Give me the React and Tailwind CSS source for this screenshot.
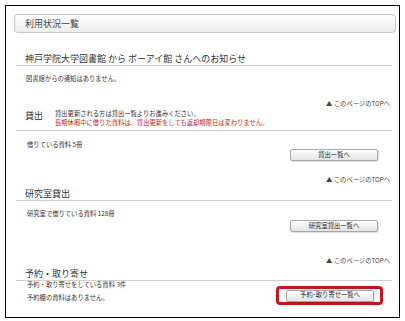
import React from 'react';

const font = { fontFamily: '"Noto Sans CJK JP", "Noto Sans", sans-serif' };

function TopLink({ className = '' }) {
  return (
    <div className={`text-right pr-[2px] text-[6.3px] leading-[9px] text-[#444] ${className}`}>
      ▲ このページのTOPへ
    </div>
  );
}

function Heading({ children, className = '' }) {
  return (
    <div className={`pl-[9px] text-[9px] leading-[13px] text-[#333] border-b border-[#cfcfcf] ${className}`}>
      {children}
    </div>
  );
}

function Button({ children, className = '' }) {
  return (
    <div
      className={`h-[12px] w-[88px] flex items-center justify-center rounded-[2px] border border-[#a8a8a8] bg-gradient-to-b from-white to-[#e4e4e4] shadow-[1px_1px_0_rgba(0,0,0,0.12)] text-[6.3px] leading-none text-[#222] ${className}`}
    >
      {children}
    </div>
  );
}

export default function App() {
  return (
    <div className="w-[405px] h-[321px] bg-white pt-[5px] pl-[5px]" style={font}>
      <div className="w-[395px] h-[313px] border border-black pl-[8px] pr-[3px] pt-[8px]">
        {/* Page title bar */}
        <div className="h-[19px] rounded-[4px] border border-[#c8c8c8] bg-gradient-to-b from-white to-[#ececec] pl-[10px] flex items-center text-[9px] text-[#444]">
          利用状況一覧
        </div>

        <div className="ml-[2px] mr-[4px]">
          {/* Notice */}
          <Heading className="mt-[19px]">神戸学院大学図書館 から ボーアイ館 さんへのお知らせ</Heading>
          <div className="mt-[8px] pl-[10px] text-[6.3px] leading-[10px] text-[#333]">図書館からの通知はありません。</div>

          {/* Loans */}
          <TopLink className="mt-[15px]" />
          <div className="mt-[1px] flex items-start border-b border-[#cfcfcf] pb-[3px]">
            <div className="w-[39px] pl-[9px] text-[9px] leading-[14px] text-[#333]">貸出</div>
            <div className="text-[6.3px] leading-[9px]">
              <div className="text-[#333]">貸出更新される方は貸出一覧よりお進みください。</div>
              <div className="text-[#c0282d]">長期休暇中に借りた資料は、貸出更新をしても返却期限日は変わりません。</div>
            </div>
          </div>
          <div className="mt-[10px] pl-[11px] text-[6.3px] leading-[8px] text-[#333]">借りている資料 5冊</div>
          <div className="flex justify-end pr-[14px]">
            <Button>貸出一覧へ</Button>
          </div>

          {/* Lab loans */}
          <TopLink className="mt-[14px]" />
          <Heading className="mt-[3px]">研究室貸出</Heading>
          <div className="mt-[9px] pl-[11px] text-[6.3px] leading-[8px] text-[#333]">研究室で借りている資料 128冊</div>
          <div className="mt-[2px] flex justify-end pr-[14px]">
            <Button>研究室貸出一覧へ</Button>
          </div>

          {/* Reservations */}
          <TopLink className="mt-[24px]" />
          <Heading className="mt-[2px]">予約・取り寄せ</Heading>
          <div className="flex justify-between">
            <div className="pl-[11px] text-[6.3px] leading-[8px] text-[#333]">
              <div>予約・取り寄せをしている資料 3件</div>
              <div className="mt-[5px]">予約棚の資料はありません。</div>
            </div>
            <div className="mt-[5px] mr-[9px] h-[19px] w-[107px] rounded-[4px] border-[3px] border-[#c4161c] flex items-center pl-[7px]">
              <Button className="w-[85px] h-[11px]">予約･取り寄せ一覧へ</Button>
            </div>
          </div>
        </div>
      </div>
    </div>
  );
}
